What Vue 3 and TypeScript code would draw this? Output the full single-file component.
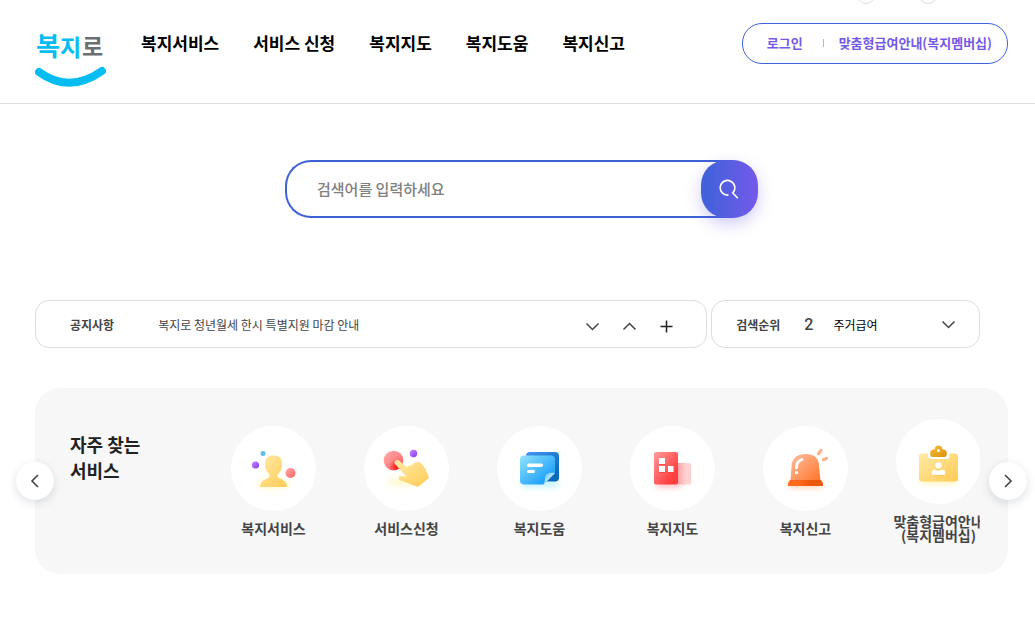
<script setup lang="ts">
import { ref } from 'vue'

interface Service {
  id: string
  lines: string[]
}

const menu: string[] = ['복지서비스', '서비스 신청', '복지지도', '복지도움', '복지신고']

const services: Service[] = [
  { id: 'person', lines: ['복지서비스'] },
  { id: 'hand', lines: ['서비스신청'] },
  { id: 'note', lines: ['복지도움'] },
  { id: 'building', lines: ['복지지도'] },
  { id: 'siren', lines: ['복지신고'] },
  { id: 'card', lines: ['맞춤형급여안내', '(복지멤버십)'] },
]

const keyword = ref('')
</script>

<template>
  <div class="page">
    <header class="header">
      <div class="utility" aria-hidden="true"><i></i><i></i></div>
      <a class="logo" href="#" aria-label="복지로">
        <svg width="72" height="66" viewBox="0 0 72 66">
          <g class="wordmark">
            <text x="1" y="34" font-size="26" fill="#05bdf2">복</text>
            <text x="25" y="34" font-size="23" fill="#05bdf2">지</text>
            <text x="47" y="33" font-size="23" fill="#6d6e72">로</text>
          </g>
          <path d="M4 50Q34 72 67 49" fill="none" stroke="#05bdf2" stroke-width="8" stroke-linecap="round" />
        </svg>
      </a>
      <nav class="menu">
        <a v-for="item in menu" :key="item" href="#">{{ item }}</a>
      </nav>
      <div class="account">
        <a href="#">로그인</a>
        <span class="bar"></span>
        <a href="#">맞춤형급여안내(복지멤버십)</a>
      </div>
    </header>

    <main class="main">
      <form class="search" @submit.prevent>
        <input v-model="keyword" type="text" placeholder="검색어를 입력하세요" aria-label="검색어" />
        <button type="submit" aria-label="검색">
          <svg width="22" height="22" viewBox="0 0 22 22" fill="none" stroke="#fff" stroke-width="1.6">
            <path d="M9.500 17A7.300 7.300 0 1 1 14 14.600" />
            <path d="M13.200 14.200L18.800 20.300" />
          </svg>
        </button>
      </form>

      <div class="info">
        <section class="box notice">
          <h2>공지사항</h2>
          <a href="#">복지로 청년월세 한시 특별지원 마감 안내</a>
          <div class="controls">
            <button type="button" aria-label="다음 공지">
              <svg width="15" height="15" viewBox="0 0 15 15"><path d="M1.5 4.5l6 6 6-6" /></svg>
            </button>
            <button type="button" aria-label="이전 공지">
              <svg width="15" height="15" viewBox="0 0 15 15"><path d="M1.5 10.5l6-6 6 6" /></svg>
            </button>
            <button type="button" aria-label="공지 더보기">
              <svg class="plus" width="15" height="15" viewBox="0 0 15 15"><path d="M7.5 1.5v12M1.5 7.5h12" /></svg>
            </button>
          </div>
        </section>
        <section class="box rank">
          <h2>검색순위</h2>
          <span class="number">2</span>
          <a href="#">주거급여</a>
          <button type="button" aria-label="검색순위 펼치기">
            <svg width="15" height="15" viewBox="0 0 15 15"><path d="M1.5 4.5l6 6 6-6" /></svg>
          </button>
        </section>
      </div>

      <section class="panel">
        <h2>자주 찾는<br />서비스</h2>
        <ul class="services">
          <li v-for="service in services" :key="service.id">
            <a href="#">
              <span class="disc">
                <svg v-if="service.id === 'person'" viewBox="0 0 85 85">
                  <defs>
                    <linearGradient id="gold" x1="0" y1="0" x2="1" y2="1">
                      <stop offset="0" stop-color="#ffeaa5" /><stop offset="1" stop-color="#ffcb55" />
                    </linearGradient>
                    <linearGradient id="violet" x1="0" y1="0" x2="1" y2="1">
                      <stop offset="0" stop-color="#c58cff" /><stop offset="1" stop-color="#8836ef" />
                    </linearGradient>
                    <linearGradient id="rose" x1="0" y1="0" x2="1" y2="1">
                      <stop offset="0" stop-color="#ffafaf" /><stop offset="1" stop-color="#ff5c5c" />
                    </linearGradient>
                    <filter id="glow" x="-50%" y="-100%" width="200%" height="300%">
                      <feGaussianBlur stdDeviation="3" />
                    </filter>
                  </defs>
                  <ellipse cx="42.500" cy="58" rx="17" ry="4" fill="#fff7c4" filter="url(#glow)" />
                  <path d="M34 38C34 32 37 29.500 42.500 29.500S51 32 51 38C51 43 49.500 46 46.500 48.500Q46 51.500 49 52.500Q56 55 56 61H29Q29 55 36 52.500Q39 51.500 38.500 48.500C35.500 46 34 43 34 38Z" fill="url(#gold)" />
                  <circle cx="32" cy="27.500" r="2.500" fill="#62bce9" />
                  <circle cx="24.500" cy="39" r="3.600" fill="url(#violet)" />
                  <circle cx="59.500" cy="47" r="5" fill="url(#rose)" />
                </svg>
                <svg v-else-if="service.id === 'hand'" viewBox="0 0 85 85">
                  <defs>
                    <radialGradient id="press" cx="33" cy="41" r="8" gradientUnits="userSpaceOnUse">
                      <stop offset="0" stop-color="#ff0d0d" /><stop offset="0.300" stop-color="#ff2929" stop-opacity="0.900" /><stop offset="1" stop-color="#ff2929" stop-opacity="0" />
                    </radialGradient>
                  </defs>
                  <ellipse cx="37" cy="56" rx="14" ry="4" fill="#fff8cc" filter="url(#glow)" />
                  <circle cx="29.500" cy="34.500" r="9.800" fill="url(#rose)" />
                  <circle cx="29.500" cy="34.500" r="9.800" fill="url(#press)" />
                  <circle cx="49.500" cy="27.500" r="3.700" fill="url(#violet)" />
                  <path d="M31 38C29.500 36 32 33 35 34.500L43 41.500Q44.500 38.500 48 39Q49.500 36 53 36.500Q55 34.500 57.500 37.500Q62 42 65 52L54 61L36.500 54.500C33.500 53 35 49.500 38 50.200L42.500 50.800Z" fill="url(#gold)" />
                </svg>
                <svg v-else-if="service.id === 'note'" viewBox="0 0 85 85">
                  <defs>
                    <linearGradient id="sheet" x1="0" y1="0" x2="1" y2="1">
                      <stop offset="0" stop-color="#93e4fb" /><stop offset="0.750" stop-color="#25a5fa" /><stop offset="1" stop-color="#1593f5" />
                    </linearGradient>
                    <linearGradient id="sheetBack" x1="0" y1="0" x2="1" y2="1">
                      <stop offset="0" stop-color="#4795f4" /><stop offset="1" stop-color="#0064ad" />
                    </linearGradient>
                    <linearGradient id="fold" x1="0" y1="0" x2="1" y2="1">
                      <stop offset="0" stop-color="#62bdf5" /><stop offset="0.600" stop-color="#c8edff" />
                    </linearGradient>
                  </defs>
                  <rect x="25" y="54" width="36" height="7" rx="3" fill="#bdf3ff" filter="url(#glow)" />
                  <rect x="29" y="26" width="33" height="29.500" rx="4" fill="url(#sheetBack)" />
                  <path d="M27 29.500H54Q58 29.500 58 33.500V47L46.500 58.500H27Q23 58.500 23 54.500V33.500Q23 29.500 27 29.500Z" fill="url(#sheet)" />
                  <path d="M46.500 58.500L58 47Q48 46 48 52Q48 56 46.500 58.500Z" fill="url(#fold)" />
                  <rect x="30" y="37.500" width="16" height="3.500" rx="1.700" fill="#fff" />
                  <rect x="30" y="44" width="8" height="3" rx="1.500" fill="#fff" />
                </svg>
                <svg v-else-if="service.id === 'building'" viewBox="0 0 85 85">
                  <defs>
                    <linearGradient id="tower" x1="0" y1="0" x2="1" y2="1">
                      <stop offset="0" stop-color="#ff9c9c" /><stop offset="0.750" stop-color="#ff4141" /><stop offset="1" stop-color="#ff3838" />
                    </linearGradient>
                    <linearGradient id="wing" x1="0" y1="0" x2="1" y2="0">
                      <stop offset="0" stop-color="#ffa2a2" /><stop offset="0.600" stop-color="#ffd2d2" />
                    </linearGradient>
                  </defs>
                  <rect x="27" y="55" width="24" height="6" fill="#ffb7b7" filter="url(#glow)" />
                  <path d="M48 37H59Q61 37 61 39V57Q61 58.500 59 58.500H48Z" fill="url(#wing)" />
                  <rect x="24" y="26" width="24" height="32.500" rx="2" fill="url(#tower)" />
                  <path d="M29 33h6v6h-6zM29 41h6v6h-6zM38 41h5.500v6H38z" fill="#ff3434" opacity="0.600" />
                  <path d="M29 32h6v6h-6zM29 40h6v6h-6zM38 40h5.500v6H38z" fill="#fff" />
                </svg>
                <svg v-else-if="service.id === 'siren'" viewBox="0 0 85 85">
                  <defs>
                    <linearGradient id="dome" x1="0" y1="0" x2="1" y2="1">
                      <stop offset="0" stop-color="#ffc0a1" /><stop offset="1" stop-color="#ff7429" />
                    </linearGradient>
                    <linearGradient id="base" x1="0" y1="0" x2="1" y2="0">
                      <stop offset="0.300" stop-color="#ff691c" /><stop offset="0.650" stop-color="#eb570b" />
                    </linearGradient>
                  </defs>
                  <rect x="26" y="56" width="33" height="5" fill="#ffc6a8" filter="url(#glow)" />
                  <path d="M27.500 55L28.500 40Q29.500 28 42.500 28T56 40L57.500 55Z" fill="url(#dome)" />
                  <path d="M27 54H58Q60 56 60 60H25Q25 56 27 54Z" fill="url(#base)" />
                  <path d="M39 33.500Q33.500 35 33.500 42" fill="none" stroke="#fff" stroke-width="2.800" stroke-linecap="round" />
                  <circle cx="33.500" cy="46.700" r="1.600" fill="#fff" />
                  <path d="M55.500 27.700L58 24.500M60.500 33.800L63.500 32.500" stroke="#ffb18a" stroke-width="3.200" stroke-linecap="round" />
                </svg>
                <svg v-else viewBox="0 0 85 85">
                  <defs>
                    <linearGradient id="clip" x1="0" y1="0" x2="1" y2="1">
                      <stop offset="0" stop-color="#f8bf3e" /><stop offset="1" stop-color="#d8910a" />
                    </linearGradient>
                  </defs>
                  <rect x="26" y="59" width="33" height="5" fill="#fff09a" filter="url(#glow)" />
                  <rect x="23" y="34.500" width="39" height="28" rx="3" fill="url(#gold)" />
                  <path d="M32 34H53.500V37Q53.500 40 50.500 40H35Q32 40 32 37Z" fill="#fff" />
                  <path d="M38.500 30.500C38.500 25 46.500 25 46.500 30.500H48C52 31 51.500 38 48.500 38H36.500C33.500 38 33 31 37 30.500Z" fill="url(#clip)" />
                  <circle cx="42.500" cy="31.500" r="1.500" fill="#fff" />
                  <g fill="#f0ae26" opacity="0.400">
                    <circle cx="42.500" cy="47.500" r="3.300" /><path d="M38 57Q34.500 51 39 51.500Q42.500 54 46 51.500Q50.500 51 47 57Z" />
                  </g>
                  <circle cx="42.500" cy="46.500" r="3.200" fill="#fff" />
                  <path d="M38 56C34.500 56 35 50.500 39 50.500Q42.500 53 46 50.500C50 50.500 50.500 56 47 56Z" fill="#fff" />
                </svg>
              </span>
              <span class="label">
                <span v-for="line in service.lines" :key="line">{{ line }}</span>
              </span>
            </a>
          </li>
        </ul>
        <button class="arrow prev" type="button" aria-label="이전">
          <svg width="16" height="16" viewBox="0 0 16 16"><path d="M11 2L5 8l6 6" /></svg>
        </button>
        <button class="arrow next" type="button" aria-label="다음">
          <svg width="16" height="16" viewBox="0 0 16 16"><path d="M5 2l6 6-6 6" /></svg>
        </button>
      </section>
    </main>
  </div>
</template>

<style>
body {
  background: #fff;
}
</style>

<style scoped>
.page {
  font-family: "Noto Sans CJK KR", sans-serif;
  color: #222;
}
.page * {
  box-sizing: border-box;
}
a {
  color: inherit;
  text-decoration: none;
  white-space: nowrap;
}
button {
  display: flex;
  align-items: center;
  justify-content: center;
  padding: 0;
  border: 0;
  background: none;
  font: inherit;
  cursor: pointer;
}
h2 {
  margin: 0;
}
svg {
  display: block;
}
.header {
  position: relative;
  display: flex;
  align-items: flex-start;
  padding: 22px 27px 16px 35px;
  border-bottom: 1px solid #ddd;
}
.utility {
  position: absolute;
  top: 0;
  right: 98px;
  display: flex;
  gap: 44px;
  height: 4px;
  overflow: hidden;
}
.utility i {
  width: 18px;
  height: 18px;
  margin-top: -14px;
  border: 1px solid #ddd;
  border-radius: 50%;
}
.wordmark {
  font-family: "Noto Sans CJK KR", sans-serif;
  font-weight: 700;
}
.logo {
  height: 65px;
}
.menu {
  display: flex;
  gap: 34px;
  margin-left: 34px;
  padding-top: 8px;
  font-size: 17px;
  font-weight: 700;
  line-height: 26px;
  color: #000;
}
.account {
  display: flex;
  align-items: center;
  height: 41px;
  margin-top: 1px;
  margin-left: auto;
  padding: 0 15px 2px 24px;
  border: 1px solid #3e61dc;
  border-radius: 20px;
  font-size: 13px;
  font-weight: 700;
  color: #7359e8;
}
.bar {
  width: 1px;
  height: 8px;
  margin: 0 15px 0 20px;
  background: #b9abf2;
}
.main {
  padding: 56px 27px 43px 35px;
}
.search {
  display: flex;
  width: 473px;
  max-width: 100%;
  height: 58px;
  margin: 0 auto;
  border-radius: 26px;
}
.search input {
  flex: 1;
  min-width: 0;
  margin-right: -29px;
  padding: 0 40px 2px 30px;
  border: 2px solid #3e61d6;
  border-right: 0;
  border-radius: 26px 0 0 26px;
  outline: 0;
  background: #fff;
  font-family: inherit;
  font-size: 15px;
  font-weight: 500;
  color: #222;
}
.search input::placeholder {
  color: #808080;
}
.search button {
  position: relative;
  width: 57px;
  border-radius: 25px;
  background: linear-gradient(90deg, #3e62d9, #7459ea);
  box-shadow: 0 6px 16px rgba(100, 90, 225, 0.3);
}
.info {
  display: grid;
  grid-template-columns: 5fr 2fr;
  gap: 4px;
  margin: 82px 28px 40px 0;
}
.box {
  display: flex;
  align-items: center;
  height: 48px;
  border: 1px solid #ddd;
  border-radius: 14px;
  font-size: 12px;
}
.box h2 {
  font-size: 12px;
  font-weight: 700;
  color: #444;
}
.box svg {
  fill: none;
  stroke: #444;
  stroke-width: 1.5;
}
.box .plus {
  stroke: #222;
}
.notice {
  padding: 0 32px 0 34px;
  color: #444;
}
.notice a {
  margin-left: 44px;
}
.controls {
  display: flex;
  gap: 22px;
  margin-left: auto;
  padding-top: 4px;
}
.rank {
  padding: 0 23px 0 24px;
  color: #000;
}
.number {
  margin: 0 20px 0 24px;
  font-family: Roboto, sans-serif;
  font-size: 16px;
  font-weight: 500;
  color: #444;
}
.rank button {
  margin-left: auto;
}
.panel {
  position: relative;
  display: flex;
  height: 186px;
  padding: 0 28px 0 35px;
  border-radius: 25px;
  background: #f7f7f7;
}
.panel h2 {
  flex: 0 0 137px;
  padding-top: 43px;
  font-size: 18px;
  font-weight: 700;
  line-height: 26px;
}
.services {
  display: flex;
  flex: 1;
  align-items: center;
  min-width: 0;
  margin: 0;
  padding: 0 0 2px;
  overflow: hidden;
  list-style: none;
}
.services li {
  flex: 0 0 133px;
}
.services a {
  display: flex;
  flex-direction: column;
  align-items: center;
  gap: 10px;
}
.disc {
  width: 85px;
  height: 85px;
  border-radius: 50%;
  background: #fff;
}
.label {
  display: flex;
  flex-direction: column;
  align-items: center;
  font-size: 14px;
  font-weight: 700;
  line-height: 14px;
  color: #444;
}
.arrow {
  position: absolute;
  top: 74px;
  width: 38px;
  height: 38px;
  border-radius: 50%;
  background: #fff;
  box-shadow: 0 3px 10px rgba(50, 60, 100, 0.16);
}
.arrow svg {
  fill: none;
  stroke: #444;
  stroke-width: 1.6;
}
.prev {
  left: -19px;
}
.next {
  right: -19px;
}
</style>
